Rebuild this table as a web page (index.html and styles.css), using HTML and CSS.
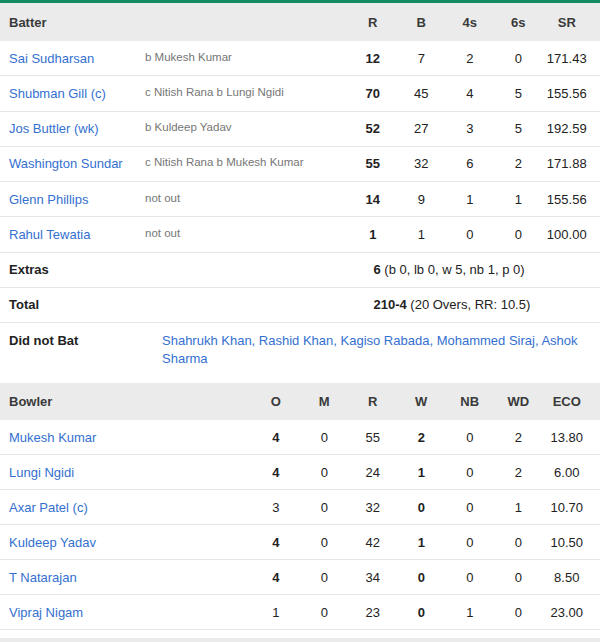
FILE: index.html
```html
<!DOCTYPE html>
<html>
<head>
<meta charset="utf-8">
<link rel="stylesheet" href="styles.css">
</head>
<body>
<div class="card">
  <div class="bat head">
    <div class="name">Batter</div><div></div>
    <div class="c">R</div><div class="c">B</div><div class="c">4s</div><div class="c">6s</div><div class="c">SR</div>
  </div>
  <div class="bat row">
    <a class="name link">Sai Sudharsan</a><div class="dis">b Mukesh Kumar</div>
    <div class="c b">12</div><div class="c">7</div><div class="c">2</div><div class="c">0</div><div class="c">171.43</div>
  </div>
  <div class="bat row">
    <a class="name link">Shubman Gill (c)</a><div class="dis">c Nitish Rana b Lungi Ngidi</div>
    <div class="c b">70</div><div class="c">45</div><div class="c">4</div><div class="c">5</div><div class="c">155.56</div>
  </div>
  <div class="bat row">
    <a class="name link">Jos Buttler (wk)</a><div class="dis">b Kuldeep Yadav</div>
    <div class="c b">52</div><div class="c">27</div><div class="c">3</div><div class="c">5</div><div class="c">192.59</div>
  </div>
  <div class="bat row">
    <a class="name link">Washington Sundar</a><div class="dis">c Nitish Rana b Mukesh Kumar</div>
    <div class="c b">55</div><div class="c">32</div><div class="c">6</div><div class="c">2</div><div class="c">171.88</div>
  </div>
  <div class="bat row">
    <a class="name link">Glenn Phillips</a><div class="dis">not out</div>
    <div class="c b">14</div><div class="c">9</div><div class="c">1</div><div class="c">1</div><div class="c">155.56</div>
  </div>
  <div class="bat row">
    <a class="name link">Rahul Tewatia</a><div class="dis">not out</div>
    <div class="c b">1</div><div class="c">1</div><div class="c">0</div><div class="c">0</div><div class="c">100.00</div>
  </div>
  <div class="bat row">
    <div class="name b">Extras</div><div></div>
    <div class="span"><b>6</b> (b 0, lb 0, w 5, nb 1, p 0)</div>
  </div>
  <div class="bat row">
    <div class="name b">Total</div><div></div>
    <div class="span"><b>210-4</b> (20 Overs, RR: 10.5)</div>
  </div>
  <div class="dnb">
    <div class="dnb-label">Did not Bat</div>
    <div class="dnb-list link">Shahrukh Khan, Rashid Khan, Kagiso Rabada, Mohammed Siraj, Ashok Sharma</div>
  </div>

  <div class="bowl head">
    <div class="name">Bowler</div>
    <div class="c">O</div><div class="c">M</div><div class="c">R</div><div class="c">W</div><div class="c">NB</div><div class="c">WD</div><div class="c">ECO</div>
  </div>
  <div class="bowl row">
    <a class="name link">Mukesh Kumar</a>
    <div class="c b">4</div><div class="c">0</div><div class="c">55</div><div class="c b">2</div><div class="c">0</div><div class="c">2</div><div class="c">13.80</div>
  </div>
  <div class="bowl row">
    <a class="name link">Lungi Ngidi</a>
    <div class="c b">4</div><div class="c">0</div><div class="c">24</div><div class="c b">1</div><div class="c">0</div><div class="c">2</div><div class="c">6.00</div>
  </div>
  <div class="bowl row">
    <a class="name link">Axar Patel (c)</a>
    <div class="c">3</div><div class="c">0</div><div class="c">32</div><div class="c b">0</div><div class="c">0</div><div class="c">1</div><div class="c">10.70</div>
  </div>
  <div class="bowl row">
    <a class="name link">Kuldeep Yadav</a>
    <div class="c b">4</div><div class="c">0</div><div class="c">42</div><div class="c b">1</div><div class="c">0</div><div class="c">0</div><div class="c">10.50</div>
  </div>
  <div class="bowl row">
    <a class="name link">T Natarajan</a>
    <div class="c b">4</div><div class="c">0</div><div class="c">34</div><div class="c b">0</div><div class="c">0</div><div class="c">0</div><div class="c">8.50</div>
  </div>
  <div class="bowl row">
    <a class="name link">Vipraj Nigam</a>
    <div class="c">1</div><div class="c">0</div><div class="c">23</div><div class="c b">0</div><div class="c">1</div><div class="c">0</div><div class="c">23.00</div>
  </div>
  <div class="next"></div>
</div>
</body>
</html>
```

FILE: styles.css
```css
* { box-sizing: border-box; }
html, body { margin: 0; padding: 0; background: #fff; }
body {
  font-family: "Liberation Sans", Arial, sans-serif;
  font-size: 13px;
  color: #222;
}
.card {
  width: 600px;
  border-top: 3px solid #138a5f;
}
.bat, .bowl {
  display: grid;
  align-items: center;
  padding: 0 9px 0 9px;
}
.bat { grid-template-columns: 136px 1fr repeat(5, 48.5px); }
.bowl { grid-template-columns: 1fr repeat(7, 48.5px); }
.head {
  background: #ebebeb;
  font-weight: bold;
  color: #3a3a3a;
}
.bat.head { height: 38px; }
.bowl.head { height: 37px; }
.row {
  height: 35.25px;
  border-bottom: 1px solid #e6e6e6;
}
.bowl.row { height: 35px; }
.c { text-align: center; }
.b { font-weight: bold; }
.link { color: #3470d0; text-decoration: none; }
.dis {
  font-size: 11.5px;
  color: #767676;
  margin-bottom: 3px;
}
.span {
  grid-column: 3 / 8;
  padding-left: 25px;
}
.dnb {
  display: flex;
  height: 60px;
  padding: 9px 8px 0 9px;
  line-height: 18px;
}
.dnb-label {
  width: 153px;
  flex: none;
  font-weight: bold;
}
.dnb-list { flex: 1; }
.next {
  margin-top: 8px;
  height: 12px;
  background: #ebebeb;
}
```
